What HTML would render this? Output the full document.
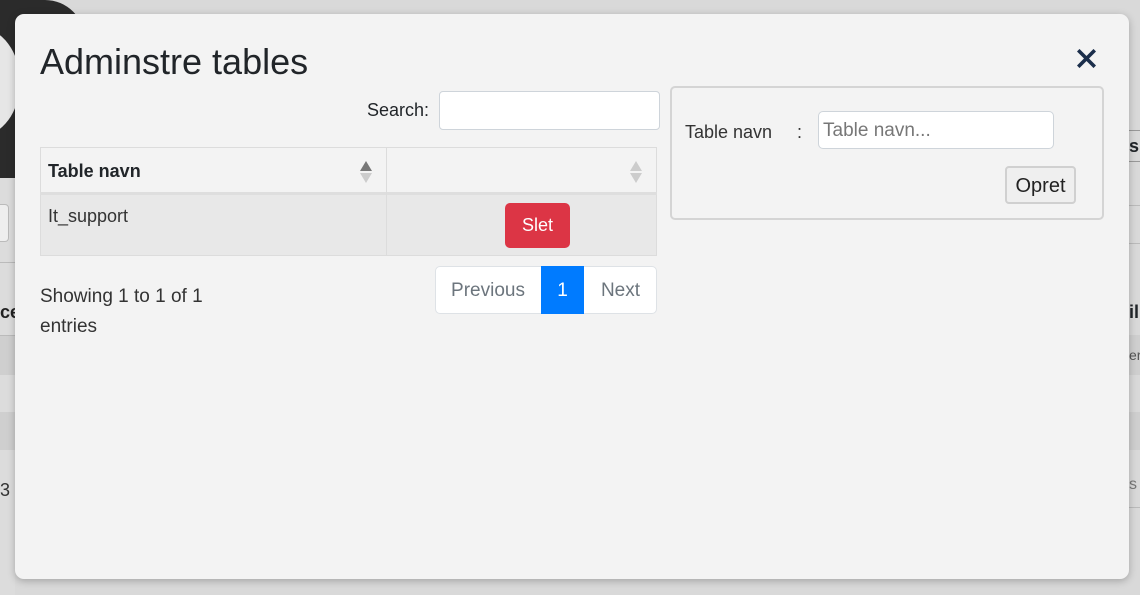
<!DOCTYPE html>
<html><head><meta charset="utf-8"><style>
*{box-sizing:border-box;margin:0;padding:0}
body{width:1140px;height:595px;overflow:hidden;background:#d9d9d9;font-family:"Liberation Sans",Arial,sans-serif;position:relative;color:#212529}
.a{position:absolute}
.modal{left:15px;top:14px;width:1114px;height:565px;background:#f3f3f3;border-radius:9px;box-shadow:0 2px 8px rgba(0,0,0,.25)}
</style></head><body>
<div class="a" style="left:0;top:0;width:85px;height:178px;background:#2b2b2b;border-top-right-radius:40px"></div>
<div class="a" style="left:-60px;top:28px;width:80px;height:108px;background:#e6e6e6;border-radius:50%"></div>
<div class="a" style="left:0;top:178px;width:15px;height:417px;background:#dcdcdc"></div>
<div class="a" style="left:0;top:204px;width:9px;height:38px;border:1px solid #bbb;border-left:none;border-radius:0 4px 4px 0;background:#eee"></div>
<div class="a" style="left:0;top:262px;width:15px;height:1px;background:#bbb"></div>
<div class="a" style="left:0;top:302px;font-weight:bold;font-size:18px;color:#222">ce</div>
<div class="a" style="left:0;top:335px;width:15px;height:40px;background:#cfcfcf;border-top:1px solid #bbb"></div>
<div class="a" style="left:0;top:412px;width:15px;height:38px;background:#cfcfcf"></div>
<div class="a" style="left:0;top:480px;font-size:18px;color:#333">3</div>
<div class="a" style="left:1129px;top:130px;width:11px;height:32px;border-top:1px solid #999;border-bottom:1px solid #999;font-weight:bold;font-size:18px;line-height:30px">s</div>
<div class="a" style="left:1129px;top:205px;width:11px;height:1px;background:#bbb"></div>
<div class="a" style="left:1129px;top:243px;width:11px;height:1px;background:#bbb"></div>
<div class="a" style="left:1129px;top:302px;font-weight:bold;font-size:18px">il</div>
<div class="a" style="left:1129px;top:335px;width:11px;height:40px;background:#cfcfcf;font-size:14px;line-height:40px;color:#555">er</div>
<div class="a" style="left:1129px;top:412px;width:11px;height:38px;background:#cfcfcf"></div>
<div class="a" style="left:1129px;top:476px;font-size:16px;color:#777">s</div>
<div class="a" style="left:1129px;top:507px;width:11px;height:1px;background:#bbb"></div>

<div class="a modal"></div>
<div class="a" style="left:40px;top:41px;font-size:36px;line-height:42px;color:#212529">Adminstre tables</div>
<svg class="a" style="left:1077px;top:49px" width="19" height="19" viewBox="0 0 19 19"><path d="M2.5 2.5L16.5 16.5M16.5 2.5L2.5 16.5" stroke="#1b2e4b" stroke-width="3.6" stroke-linecap="square"/></svg>

<div class="a" style="left:367px;top:100px;font-size:18px">Search:</div>
<div class="a" style="left:439px;top:91px;width:221px;height:39px;background:#fff;border:1px solid #ced4da;border-radius:4px"></div>

<div class="a" style="left:40px;top:147px;width:617px;height:109px;border:1px solid #dcdcdc"></div>
<div class="a" style="left:40px;top:192px;width:617px;height:3px;background:#dedede"></div>
<div class="a" style="left:41px;top:195px;width:615px;height:60px;background:#e8e8e8"></div>
<div class="a" style="left:386px;top:148px;width:1px;height:107px;background:#dcdcdc"></div>
<div class="a" style="left:48px;top:161px;font-size:18px;font-weight:bold">Table navn</div>
<svg class="a" style="left:359px;top:161px" width="14" height="22"><path d="M1 10L7 0L13 10Z" fill="#777"/><path d="M1 12L7 22L13 12Z" fill="#ccc"/></svg>
<svg class="a" style="left:629px;top:161px" width="14" height="22"><path d="M1 10L7 0L13 10Z" fill="#ccc"/><path d="M1 12L7 22L13 12Z" fill="#ccc"/></svg>
<div class="a" style="left:48px;top:206px;font-size:18px;color:#333">It_support</div>
<div class="a" style="left:505px;top:203px;width:65px;height:45px;background:#dc3545;border-radius:5px;color:#fff;font-size:18px;line-height:45px;text-align:center">Slet</div>

<div class="a" style="left:40px;top:282px;font-size:19px;line-height:30px;color:#333">Showing 1 to 1 of 1<br>entries</div>
<div class="a" style="left:435px;top:266px;width:222px;height:48px;background:#fff;border:1px solid #dee2e6;border-radius:5px"></div>
<div class="a" style="left:435px;top:266px;width:106px;height:48px;line-height:50px;text-align:center;color:#6c757d;font-size:19px">Previous</div>
<div class="a" style="left:541px;top:266px;width:43px;height:48px;line-height:50px;text-align:center;background:#007bff;color:#fff;font-size:19px">1</div>
<div class="a" style="left:584px;top:266px;width:73px;height:48px;line-height:50px;text-align:center;color:#6c757d;font-size:19px">Next</div>

<div class="a" style="left:670px;top:86px;width:434px;height:134px;border:2px solid #d4d4d4;border-radius:5px"></div>
<div class="a" style="left:685px;top:122px;font-size:18px;color:#333">Table navn</div>
<div class="a" style="left:797px;top:122px;font-size:18px;color:#333">:</div>
<div class="a" style="left:818px;top:111px;width:236px;height:38px;background:#fff;border:1px solid #ced4da;border-radius:5px;padding-left:4px;font-size:19px;line-height:38px;color:#777">Table navn...</div>
<div class="a" style="left:1005px;top:166px;width:71px;height:38px;background:#efefef;border:2px solid #d0d0d0;border-radius:4px;font-size:20px;line-height:36px;text-align:center;color:#222">Opret</div>
</body></html>
